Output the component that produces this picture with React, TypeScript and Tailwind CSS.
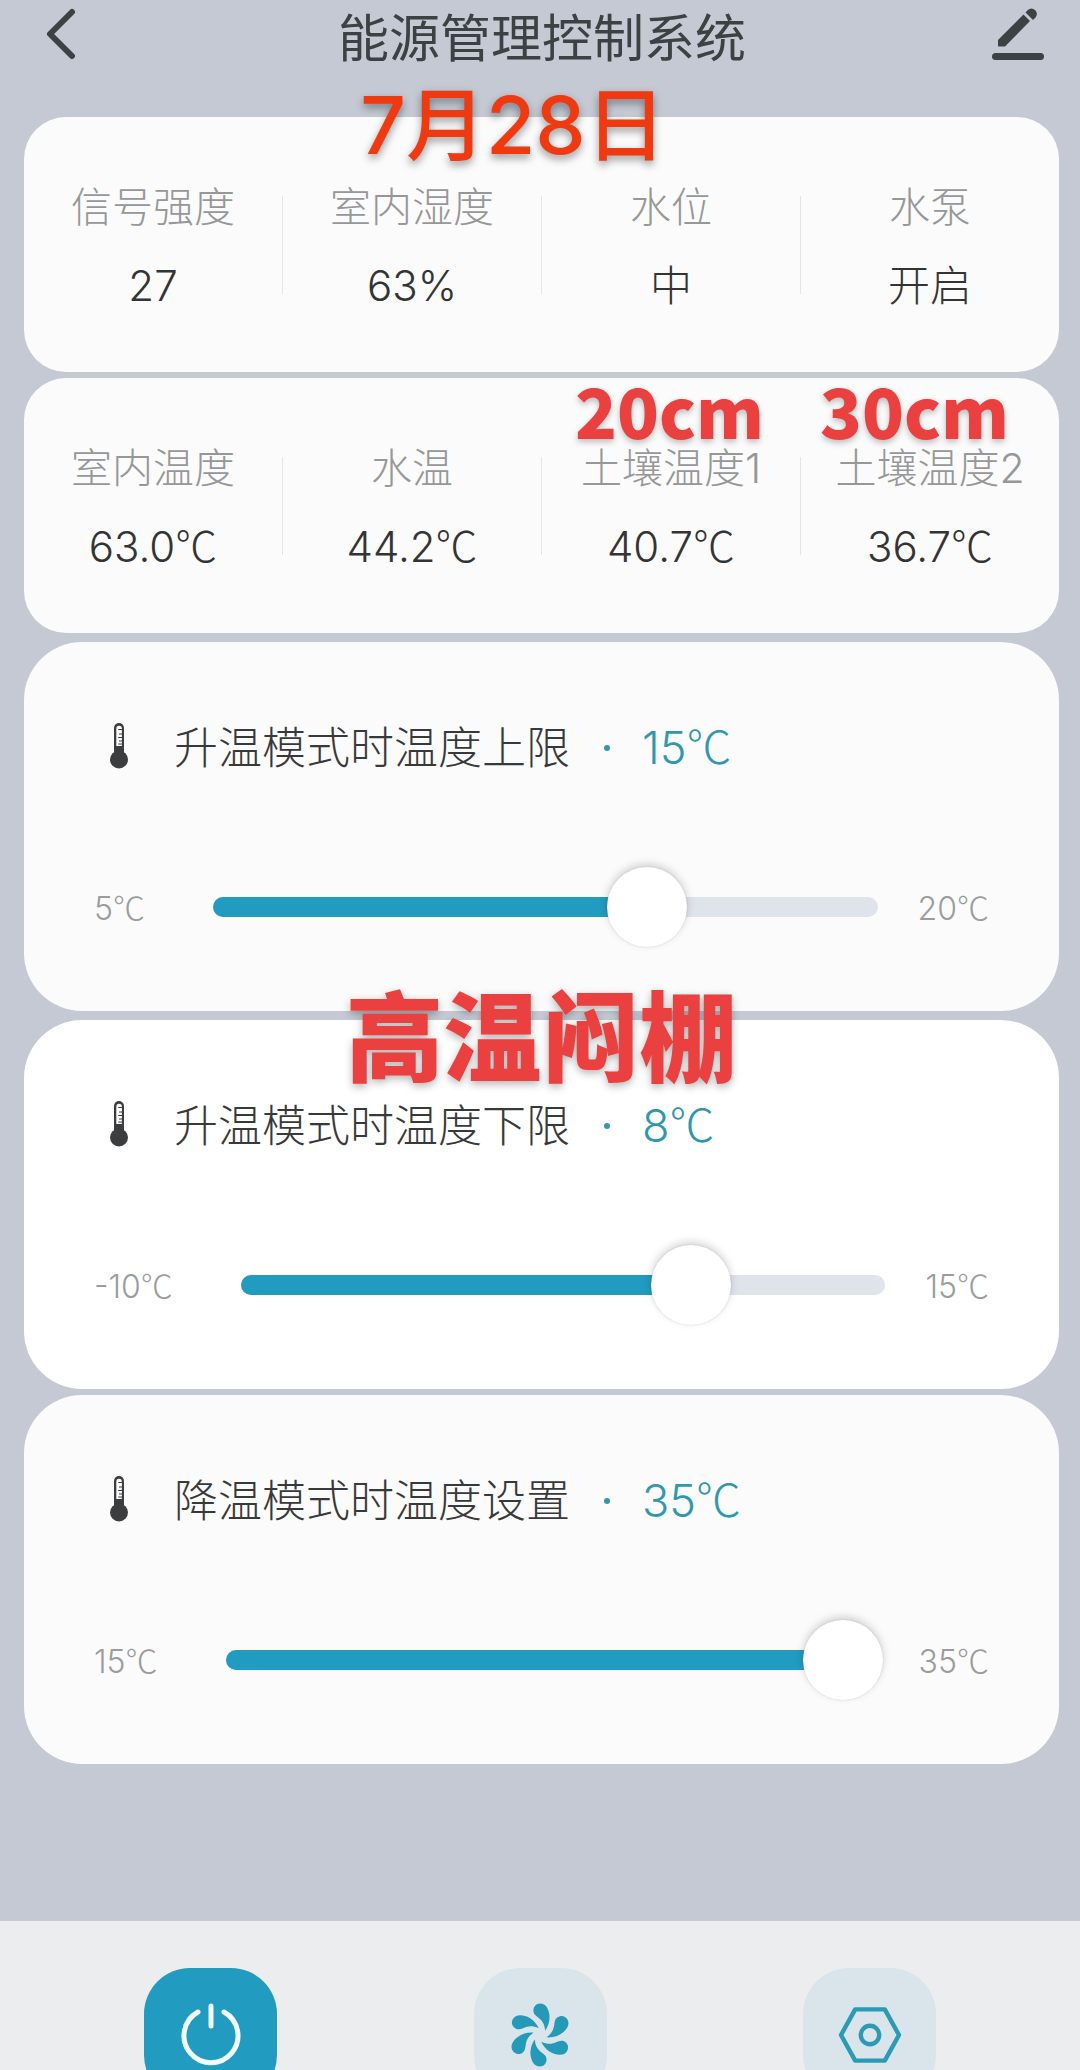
import { useId, useState } from 'react'

type Stat = {
  label: string
  value: string
  unit?: boolean
}

type Setting = {
  title: string
  min: number
  max: number
  value: number
}

const THUMB = 80

const airStats: Stat[] = [
  { label: '信号强度', value: '27' },
  { label: '室内湿度', value: '63%' },
  { label: '水位', value: '中' },
  { label: '水泵', value: '开启' },
]

const tempStats: Stat[] = [
  { label: '室内温度', value: '63.0', unit: true },
  { label: '水温', value: '44.2', unit: true },
  { label: '土壤温度1', value: '40.7', unit: true },
  { label: '土壤温度2', value: '36.7', unit: true },
]

const heatUpper: Setting = { title: '升温模式时温度上限', min: 5, max: 20, value: 15 }
const heatLower: Setting = { title: '升温模式时温度下限', min: -10, max: 15, value: 8 }
const cooling: Setting = { title: '降温模式时温度设置', min: 15, max: 35, value: 35 }

function BackIcon() {
  return (
    <svg width="36" height="56" viewBox="0 0 36 56" fill="none" stroke="#3c4144" strokeWidth="6" strokeLinecap="round" strokeLinejoin="round">
      <path d="M32 5 L10 27 L32 49" />
    </svg>
  )
}

function EditIcon() {
  return (
    <svg width="52" height="56" viewBox="0 0 52 56" fill="#3c4144">
      <path d="M6 33 L31.5 7.5 L38 14 L13 39.5 H6.8 Q6 39.5 6 38.7 Z" />
      <path d="M33.5 5.5 L35.8 3 Q39.5 0 43 3 Q46.5 6.5 43.5 10.5 L41 13 Z" />
      <rect x="0" y="46" width="52" height="7" rx="3.5" />
    </svg>
  )
}

function ThermometerIcon() {
  return (
    <svg width="18" height="50" viewBox="0 0 18 50">
      <rect x="4" y="0" width="10" height="34" rx="5" fill="#3c3d3e" />
      <circle cx="9" cy="36.5" r="9" fill="#3c3d3e" />
      <path d="M6.3 23 V6 Q6.3 2.8 9 2.8 Q11.9 2.8 11.9 6 V23 Z" fill="#fff" />
      <path d="M8.2 6.5 H12 M9 11 H12 M8.2 14.5 H12 M9 18 H12 M8.2 21 H12" stroke="#3c3d3e" strokeWidth="1" />
    </svg>
  )
}

function PowerIcon() {
  return (
    <svg width="64" height="64" viewBox="0 0 64 64" fill="none" stroke="#f2fdff" strokeWidth="5" strokeLinecap="round">
      <path d="M19 9 A27 27 0 1 0 45 9" />
      <path d="M32 3 V23" />
    </svg>
  )
}

function FanIcon() {
  return (
    <svg width="64" height="64" viewBox="-32 -32 64 64" fill="#249ab8">
      {[0, 60, 120, 180, 240, 300].map((deg) => (
        <path
          key={deg}
          transform={`rotate(${deg})`}
          d="M5.2 -4.5 C8.5 -9 10.4 -15.5 9.2 -21.5 C8 -28 4.8 -31.5 0.3 -31.5 C-4 -31.5 -7 -28 -6.5 -23.5 C-5.6 -17 4.2 -18 5.2 -4.5 Z"
        />
      ))}
    </svg>
  )
}

function HexIcon() {
  return (
    <svg width="64" height="64" viewBox="-32 -32 64 64" fill="none" stroke="#2c99b5" strokeWidth="4.4" strokeLinejoin="round">
      <path d="M-14.8 -25.6 H14.8 L29 0 L14.8 25.6 H-14.8 L-29 0 Z" />
      <circle r="9.2" />
    </svg>
  )
}

// Inter 的 ℃ 太宽，单位用中文字体的全角字形
function Celsius() {
  return <span className="font-['Noto_Sans_CJK_SC',sans-serif] leading-none">℃</span>
}

function StatCard({ stats }: { stats: Stat[] }) {
  return (
    <dl className="flex items-center rounded-[42px] bg-[#fbfbfb]">
      {stats.map((s, i) => (
        <div key={s.label} className="contents">
          {i > 0 && <div className="h-[98px] w-px bg-[#e4e5e6]" />}
          <div className="flex-1 basis-0 pt-[60px] pb-14 text-center">
            <dt className="h-[60px] text-[41px] leading-[60px] font-light whitespace-nowrap text-[#969798]">{s.label}</dt>
            <dd className="mt-[19px] h-[60px] text-[42px] leading-[60px] font-light whitespace-nowrap text-[#333435]">
              {s.value}
              {s.unit && <Celsius />}
            </dd>
          </div>
        </div>
      ))}
    </dl>
  )
}

function SettingCard({ setting, white = false }: { setting: Setting; white?: boolean }) {
  const id = useId()
  const [value, setValue] = useState(setting.value)
  const ratio = (value - setting.min) / (setting.max - setting.min)

  return (
    <section className={`rounded-[58px] px-[70px] pt-[66px] pb-16 ${white ? 'bg-white' : 'bg-[#fbfbfb]'}`}>
      <div className="flex h-20 items-center pl-4">
        <ThermometerIcon />
        <label htmlFor={id} className="ml-[46px] text-[44px] font-light text-[#38393a]">
          {setting.title}
        </label>
        <span className="ml-[34px] size-[6px] rounded-full bg-[#2f97ae]" />
        <output htmlFor={id} className="ml-8 text-[45px] font-light text-[#2f97ae]">
          {value}
          <Celsius />
        </output>
      </div>

      <div className="mt-[79px] flex h-20 items-center text-[32px] font-light text-[#9b9c9d]">
        <span className="pt-1">
          {setting.min}
          <Celsius />
        </span>
        <div className="mr-10 ml-[68px] grid flex-1 items-center">
          <div className="col-start-1 row-start-1 h-5 overflow-hidden rounded-full bg-[#dfe4ea]">
            <div
              className="h-full bg-[#219bc0]"
              style={{ width: `calc(${THUMB / 2}px + (100% - ${THUMB}px) * ${ratio})` }}
            />
          </div>
          <input
            id={id}
            type="range"
            min={setting.min}
            max={setting.max}
            value={value}
            onChange={(e) => setValue(Number(e.target.value))}
            className="col-start-1 row-start-1 h-20 w-full translate-x-1 cursor-pointer appearance-none bg-transparent focus:outline-none [&::-webkit-slider-thumb]:size-20 [&::-webkit-slider-thumb]:appearance-none [&::-webkit-slider-thumb]:rounded-full [&::-webkit-slider-thumb]:bg-white [&::-webkit-slider-thumb]:shadow-[0_-3px_8px_rgba(0,0,0,0.18),0_0_2px_rgba(0,0,0,0.12)]"
          />
        </div>
        <span className="pt-1">
          {setting.max}
          <Celsius />
        </span>
      </div>
    </section>
  )
}

export default function App() {
  return (
    <div className="h-screen overflow-hidden bg-[#c5c9d3] font-['Inter','Noto_Sans_CJK_SC',sans-serif]">
      <header className="relative flex h-[70px] items-center justify-between pr-9 pl-10">
        <button aria-label="返回" className="w-[52px] cursor-pointer">
          <BackIcon />
        </button>
        <h1 className="pt-2 text-[51px] leading-[64px] text-[#3c4144]">能源管理控制系统</h1>
        <button aria-label="编辑" className="cursor-pointer">
          <EditIcon />
        </button>
        <p className="absolute top-20 left-[47.5%] z-10 -translate-x-1/2 text-[80px] leading-[90px] font-medium whitespace-nowrap text-[#ef3911] [text-shadow:0_4px_8px_rgba(0,0,0,0.4)]">
          7月28日
        </p>
      </header>

      <main className="flex flex-col gap-[9px] pt-[47px] pr-[21px] pb-[157px] pl-6">
        <div className="flex flex-col gap-[6px]">
          <StatCard stats={airStats} />
          <div className="relative">
            <StatCard stats={tempStats} />
            {/* 探头埋深标注 */}
            <div className="absolute top-0 right-[50px] flex gap-14 font-['Noto_Sans_CJK_SC',sans-serif] text-[69px] leading-[62px] font-black text-[#ea4040] [text-shadow:0_3px_6px_rgba(0,0,0,0.25)]">
              <span>20cm</span>
              <span>30cm</span>
            </div>
          </div>
        </div>
        <SettingCard setting={heatUpper} />
        <div className="relative flex flex-col gap-[6px]">
          <p className="absolute -top-11 left-1/2 -translate-x-1/2 font-['Noto_Sans_CJK_SC',sans-serif] text-[98px] leading-[110px] font-black whitespace-nowrap text-[#ea4040] [text-shadow:0_3px_8px_rgba(0,0,0,0.3)]">
            高温闷棚
          </p>
          <SettingCard setting={heatLower} white />
          <SettingCard setting={cooling} />
        </div>
      </main>

      <nav className="flex justify-between bg-[#ecedef] px-36 pt-[47px] pb-12">
        <button aria-label="电源" className="flex size-[133px] items-center justify-center rounded-[46px] bg-[#219bc0]">
          <PowerIcon />
        </button>
        <button aria-label="风机" className="flex size-[133px] items-center justify-center rounded-[46px] bg-[#d9e5eb]">
          <FanIcon />
        </button>
        <button aria-label="设置" className="flex size-[133px] items-center justify-center rounded-[46px] bg-[#d9e5eb]">
          <HexIcon />
        </button>
      </nav>
    </div>
  )
}
